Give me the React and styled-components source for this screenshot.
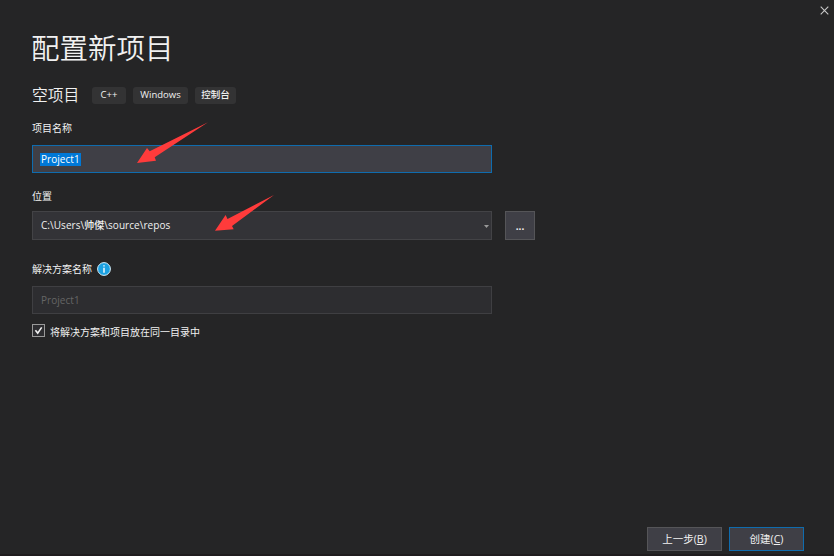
import React from "react";
import styled, { createGlobalStyle } from "styled-components";

const GlobalStyle = createGlobalStyle`
  * { box-sizing: border-box; }
  body {
    margin: 0;
    background: #252526;
    color: #f1f1f1;
    font-family: "Open Sans", "Noto Sans CJK SC", sans-serif;
    font-size: 10px;
  }
`;

const Dialog = styled.main`
  position: relative;
  display: flex;
  flex-direction: column;
  width: 834px;
  height: 556px;
  overflow: hidden;
  background: #252526;
  border-bottom: 2px solid #1f1c1e;
`;

const TitleBar = styled.header`
  display: flex;
  justify-content: flex-end;
  height: 20px;
  padding: 6px 5px 0 0;
`;

const CloseIcon = styled.svg`
  width: 9px;
  height: 9px;
`;

const Content = styled.section`
  display: flex;
  flex-direction: column;
  flex: 1;
  padding: 0 0 0 32px;
`;

const Title = styled.h1`
  margin: 7px 0 0 -1px;
  height: 42px;
  font-size: 28.5px;
  line-height: 42px;
  font-weight: 350;
  white-space: nowrap;
`;

const TemplateRow = styled.div`
  display: flex;
  align-items: center;
  height: 20px;
  margin-top: 16px;
`;

const TemplateName = styled.h2`
  width: 60px;
  margin: 0;
  font-size: 15.8px;
  line-height: 20px;
  font-weight: 350;
`;

const Tag = styled.span`
  display: flex;
  align-items: center;
  justify-content: center;
  width: ${(p) => p.$width}px;
  height: 17px;
  margin-right: 7px;
  padding-bottom: 1px;
  border-radius: 3px;
  background: #333334;
  font-size: 9.5px;
  font-weight: 500;
  line-height: 16px;
`;

const Label = styled.label`
  display: flex;
  align-items: center;
  gap: 5px;
  height: 14px;
  margin-top: ${(p) => p.$top}px;
  line-height: 14px;
`;

const FieldRow = styled.div`
  display: flex;
  gap: 13px;
  margin-top: ${(p) => p.$top}px;
`;

const fieldTones = {
  active: { bg: "#3f3f46", border: "#0f6cae", color: "#ffffff" },
  normal: { bg: "#333337", border: "#434346", color: "#f1f1f1" },
  disabled: { bg: "#2d2d30", border: "#3f3f42", color: "#656565" },
};

const Field = styled.div`
  display: flex;
  align-items: center;
  justify-content: space-between;
  width: 460px;
  height: ${(p) => p.$height}px;
  padding: 0 2px 0 8px;
  border: 1px solid ${(p) => fieldTones[p.$tone].border};
  background: ${(p) => fieldTones[p.$tone].bg};
  color: ${(p) => fieldTones[p.$tone].color};
  font-size: 10px;
  font-weight: ${(p) => (p.$tone === "disabled" ? 400 : 500)};
  letter-spacing: 0.05px;
  white-space: nowrap;
`;

const Selected = styled.span`
  height: 13px;
  margin-left: -1px;
  padding: 0 1px;
  background: #0078d7;
  line-height: 12px;
`;

const PathText = styled.span`
  padding-bottom: 1px;
  line-height: 14px;
`;

const Caret = styled.svg`
  width: 5px;
  height: 3px;
  margin-top: 1px;
`;

const Button = styled.button`
  display: flex;
  align-items: center;
  justify-content: center;
  width: ${(p) => p.$width}px;
  height: ${(p) => p.$height}px;
  padding: 0 0 1px;
  border: 1px solid ${(p) => (p.$primary ? "#0f6cae" : "#555558")};
  background: #3f3f46;
  color: #f1f1f1;
  font: inherit;
  font-size: ${(p) => p.$size || 10}px;
`;

const Ellipsis = styled.span`
  padding-top: 2px;
  font-weight: 700;
`;

const AccessKey = styled.span`
  text-decoration: underline;
  text-underline-offset: 1px;
`;

const InfoIcon = styled.svg`
  width: 14px;
  height: 14px;
`;

const CheckRow = styled.div`
  display: flex;
  align-items: flex-start;
  gap: 5px;
  height: 16px;
  margin-top: 10px;
`;

const CheckText = styled.span`
  padding-top: 1px;
  line-height: 14px;
`;

const CheckBox = styled.svg`
  width: 13px;
  height: 13px;
`;

const Footer = styled.footer`
  display: flex;
  justify-content: flex-end;
  gap: 7px;
  padding: 0 30px 3px 0;
`;

const Arrows = styled.svg`
  position: absolute;
  inset: 0;
  width: 834px;
  height: 556px;
  pointer-events: none;
`;

export default function App() {
  return (
    <Dialog>
      <GlobalStyle />
      <TitleBar>
        <CloseIcon viewBox="0 0 9 9">
          <path d="M.7.7l7.6 7.6M8.3.7L.7 8.3" stroke="#c8c8c8" strokeWidth="1.1" />
        </CloseIcon>
      </TitleBar>
      <Content>
        <Title>配置新项目</Title>
        <TemplateRow>
          <TemplateName>空项目</TemplateName>
          <Tag $width={34}>C++</Tag>
          <Tag $width={55}>Windows</Tag>
          <Tag $width={41}>控制台</Tag>
        </TemplateRow>
        <Label $top={16}>项目名称</Label>
        <FieldRow $top={10}>
          <Field $tone="active" $height={28}>
            <Selected>Project1</Selected>
          </Field>
        </FieldRow>
        <Label $top={16}>位置</Label>
        <FieldRow $top={8}>
          <Field $tone="normal" $height={29}>
            <PathText>C:\Users\帅傑\source\repos</PathText>
            <Caret viewBox="0 0 5 3">
              <path d="M0 0h5L2.5 3z" fill="#999" />
            </Caret>
          </Field>
          <Button $width={30} $height={29}>
            <Ellipsis>...</Ellipsis>
          </Button>
        </FieldRow>
        <Label $top={22}>
          解决方案名称
          <InfoIcon viewBox="0 0 14 14">
            <circle cx="7" cy="7" r="6.4" fill="#1ba1e2" stroke="#d8eef8" strokeWidth="1" />
            <path d="M7 5.8v4.9M7 3.2v1.4" stroke="#fff" strokeWidth="1.4" />
          </InfoIcon>
        </Label>
        <FieldRow $top={10}>
          <Field $tone="disabled" $height={28}>
            <span>Project1</span>
          </Field>
        </FieldRow>
        <CheckRow>
          <CheckBox viewBox="0 0 13 13">
            <rect x=".5" y=".5" width="12" height="12" fill="#2d2d30" stroke="#999" />
            <path d="M3.4 6.3l2.3 2.8L9.7 3.4" fill="none" stroke="#f1f1f1" strokeWidth="1.6" />
          </CheckBox>
          <CheckText>将解决方案和项目放在同一目录中</CheckText>
        </CheckRow>
      </Content>
      <Footer>
        <Button $width={75} $height={24} $size={10.5}>
          上一步(<AccessKey>B</AccessKey>)
        </Button>
        <Button $width={75} $height={24} $size={10.5} $primary>
          创建(<AccessKey>C</AccessKey>)
        </Button>
      </Footer>
      <Arrows viewBox="0 0 834 556" fill="#ff3b3b">
        <path d="M137 163L147 148L149.7 151.2L208 122.2L154.7 157.2L156 160.8Z" />
        <path d="M215 230.8L225.6 215L227.5 219L274 195L232 226L233.7 229.2Z" />
      </Arrows>
    </Dialog>
  );
}
